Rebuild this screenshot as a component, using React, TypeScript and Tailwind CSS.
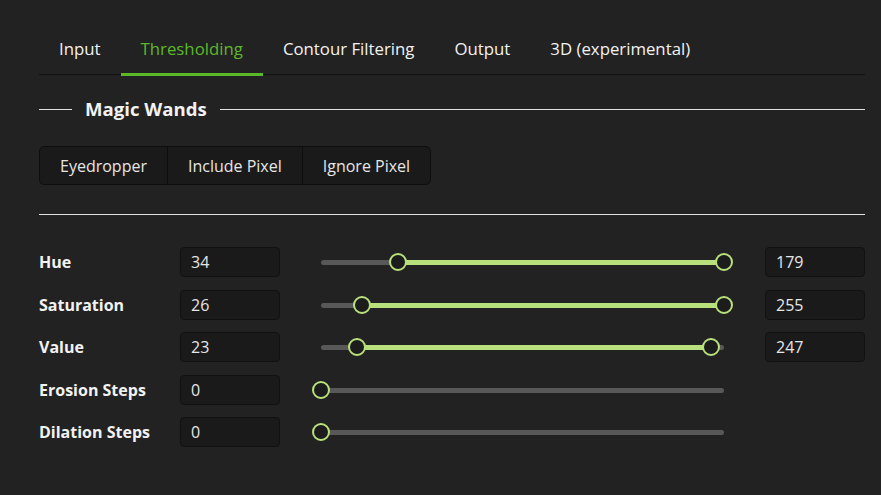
import { useState } from "react";

const tabs = ["Input", "Thresholding", "Contour Filtering", "Output", "3D (experimental)"];

type Row = { label: string; lo: number; hi?: number; max: number };

const rows: Row[] = [
  { label: "Hue", lo: 34, hi: 179, max: 179 },
  { label: "Saturation", lo: 26, hi: 255, max: 255 },
  { label: "Value", lo: 23, hi: 247, max: 255 },
  { label: "Erosion Steps", lo: 0, max: 5 },
  { label: "Dilation Steps", lo: 0, max: 5 },
];

function NumBox({ value }: { value: number }) {
  return (
    <div className="flex h-[30px] w-[100px] items-center rounded-[4px] border border-[#111] bg-[#1a1a1a] pl-[10px] text-[16px] text-[#e6e6e6]">
      {value}
    </div>
  );
}

function Slider({ lo, hi, max }: { lo: number; hi?: number; max: number }) {
  const a = (lo / max) * 100;
  const b = hi === undefined ? a : (hi / max) * 100;
  return (
    <div className="relative h-[18px] w-full">
      <div className="absolute top-[7px] h-[5px] w-full rounded-full bg-[#585858]" />
      {hi !== undefined && (
        <div
          className="absolute top-[7px] h-[5px] bg-[#b8e07c]"
          style={{ left: `${a}%`, width: `${b - a}%` }}
        />
      )}
      <Thumb pos={a} />
      {hi !== undefined && <Thumb pos={b} />}
    </div>
  );
}

function Thumb({ pos }: { pos: number }) {
  return (
    <div
      className="absolute top-0 h-[18px] w-[18px] -translate-x-1/2 rounded-full border-2 border-[#b8e07c] bg-[#1c1c1c]"
      style={{ left: `${pos}%` }}
    />
  );
}

export default function App() {
  const [active, setActive] = useState(1);
  return (
    <div className="min-h-[495px] bg-[#222222] pl-[39px] pr-[16px] pt-[24px] font-['Open_Sans',sans-serif] text-[16px] text-[#f2f2f2]">
      <div className="flex border-b border-[#111]">
        {tabs.map((t, i) => (
          <button
            key={t}
            type="button"
            onClick={() => setActive(i)}
            className={
              "-mb-[2px] border-b-[3px] px-5 pb-[12px] pt-[13px] text-[16.8px] leading-[24px] " +
              (i === active ? "border-[#5cb82b] text-[#5cb82b]" : "border-transparent")
            }
          >
            {t}
          </button>
        ))}
      </div>

      <div className="mt-[22px] flex items-center gap-[13px]">
        <div className="h-px w-[33px] bg-[#e0e0e0]" />
        <h2 className="text-[18.6px] font-bold leading-[24px]">Magic Wands</h2>
        <div className="h-px flex-1 bg-[#e0e0e0]" />
      </div>

      <div className="mt-[25px] flex w-fit overflow-hidden rounded-[5px] border border-[#0e0e0e] bg-[#1a1a1a]">
        {["Eyedropper", "Include Pixel", "Ignore Pixel"].map((b, i) => (
          <button
            key={b}
            type="button"
            className={"h-[37px] px-5 text-[#e6e6e6] " + (i > 0 ? "border-l border-[#0e0e0e]" : "")}
          >
            {b}
          </button>
        ))}
      </div>

      <div className="mt-[29px] h-px bg-[#e0e0e0]" />

      <div className="mt-[32px] flex flex-col gap-[12.5px]">
        {rows.map((r) => (
          <div key={r.label} className="grid grid-cols-[141px_100px_1fr_100px] items-center">
            <span className="font-bold">{r.label}</span>
            <NumBox value={r.lo} />
            <div className="px-[41px]">
              <Slider lo={r.lo} hi={r.hi} max={r.max} />
            </div>
            {r.hi !== undefined ? <NumBox value={r.hi} /> : <div />}
          </div>
        ))}
      </div>
    </div>
  );
}
